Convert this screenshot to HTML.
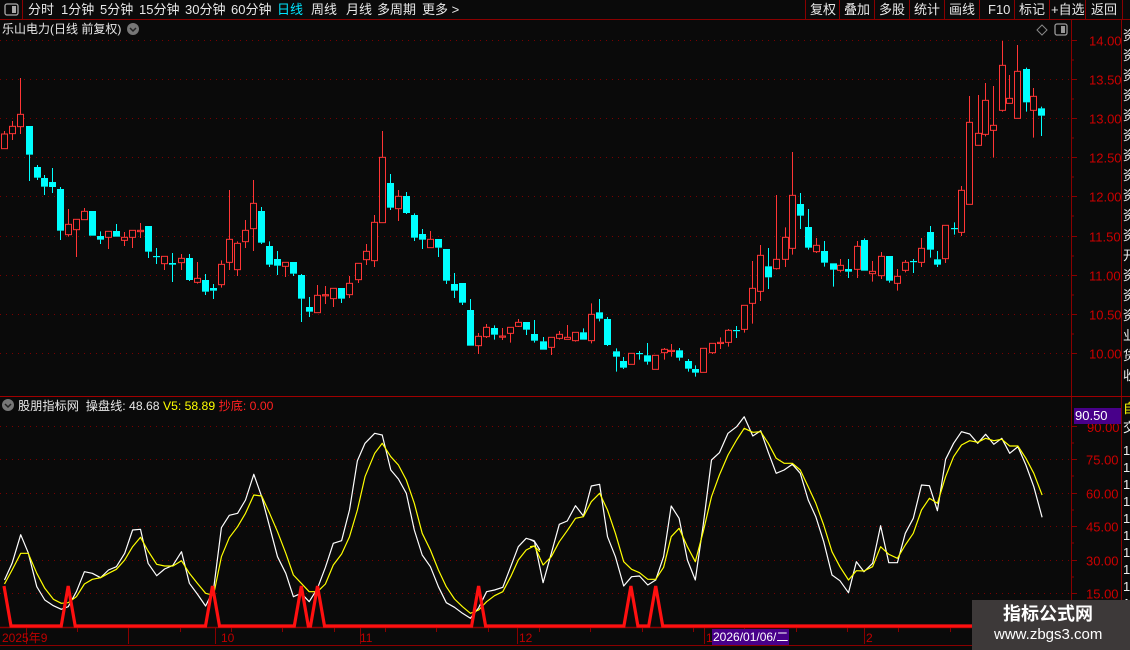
<!DOCTYPE html>
<html><head><meta charset="utf-8">
<style>
*{margin:0;padding:0;box-sizing:border-box}
body{width:1130px;height:650px;background:#0a0a0a;overflow:hidden;position:relative;font-family:"Liberation Sans","Noto Sans CJK SC",sans-serif;color:#ddd}
.t{position:absolute;font-size:13px;white-space:nowrap;line-height:16px}
.b{position:absolute;font-size:13px;white-space:nowrap;line-height:16px;top:2px;color:#e8e8e8}
svg{position:absolute;left:0;top:0}
</style></head><body>
<svg id="s" width="1130" height="650" xmlns="http://www.w3.org/2000/svg"></svg>

<div class="b" style="left:28px">分时</div>
<div class="b" style="left:61px">1分钟</div>
<div class="b" style="left:100px">5分钟</div>
<div class="b" style="left:139px">15分钟</div>
<div class="b" style="left:185px">30分钟</div>
<div class="b" style="left:231px">60分钟</div>
<div class="b" style="left:277px;color:#00e5ff">日线</div>
<div class="b" style="left:311px">周线</div>
<div class="b" style="left:346px">月线</div>
<div class="b" style="left:377px">多周期</div>
<div class="b" style="left:422px">更多 &gt;</div>
<div class="b" style="left:810px">复权</div>
<div class="b" style="left:844px">叠加</div>
<div class="b" style="left:879px">多股</div>
<div class="b" style="left:914px">统计</div>
<div class="b" style="left:949px">画线</div>
<div class="b" style="left:988px">F10</div>
<div class="b" style="left:1019px">标记</div>
<div class="b" style="left:1051px">+自选</div>
<div class="b" style="left:1091px">返回</div>
<div class="t" style="left:2px;top:21px;color:#e8e8e8;font-size:12px">乐山电力(日线 前复权)</div>
<div class="t" style="left:18px;top:398px;color:#e8e8e8;font-size:12.2px">股朋指标网&nbsp; 操盘线: 48.68 <span style="color:#ffff00">V5: 58.89</span> <span style="color:#ff2020">抄底: 0.00</span></div>
<div class="t" style="left:1074px;top:408px;width:47px;height:16px;background:#48008a;color:#fff;padding-left:1px">90.50</div>
<div class="t" style="left:2px;top:630px;color:#c00000;font-size:12px">2025年9</div>
<div class="t" style="left:221px;top:630px;color:#c00000;font-size:12px">10</div>
<div class="t" style="left:360px;top:630px;color:#c00000;font-size:12px">11</div>
<div class="t" style="left:519px;top:630px;color:#c00000;font-size:12px">12</div>
<div class="t" style="left:706px;top:630px;color:#c00000;font-size:12px">1</div>
<div class="t" style="left:712px;top:629px;width:77px;height:16px;background:#48008a;color:#fff;font-size:12px;padding-left:1px">2026/01/06/二</div>
<div class="t" style="left:866px;top:630px;color:#c00000;font-size:12px">2</div>
<div style="position:absolute;left:972px;top:600px;width:158px;height:50px;background:#3d3939"></div>
<div class="t" style="left:1003px;top:603px;color:#fff;font-size:18px;font-weight:bold;line-height:22px">指标公式网</div>
<div class="t" style="left:994px;top:626px;color:#fff;font-size:15px;line-height:18px">www.zbgs3.com</div>

<script>
var s=document.getElementById('s');var h='';
function L(x1,y1,x2,y2,c,w,d){h+='<line x1="'+x1+'" y1="'+y1+'" x2="'+x2+'" y2="'+y2+'" stroke="'+c+'" stroke-width="'+(w||1)+'"'+(d?' stroke-dasharray="'+d+'"':'')+'/>';}
function T(x,y,t,c,fs){h+='<text x="'+x+'" y="'+y+'" fill="'+c+'" font-size="'+(fs||13)+'" font-family="Liberation Sans">'+t+'</text>';}
var R='#8a0000';
L(0,19.5,1130,19.5,R);L(22.5,0,22.5,19,R);
h+='<rect x="5" y="4" width="13" height="11" rx="2" fill="none" stroke="#aaa" stroke-width="1.3"/><rect x="12" y="6" width="4" height="7" fill="#aaa"/>';
[805,839,874,909,944,979,1014,1049,1085,1122].forEach(function(x){L(x+.5,0,x+.5,19,R);});
h+='<circle cx="133" cy="29" r="6" fill="#777"/><path d="M130 28l3 3 3-3" stroke="#222" stroke-width="1.5" fill="none"/>';
h+='<path d="M1042 25l5 5-5 5-5-5z" fill="none" stroke="#888"/><rect x="1055" y="24" width="12" height="11" rx="2" fill="none" stroke="#999" stroke-width="1.3"/><rect x="1061" y="26" width="4" height="7" fill="#999"/>';
L(1071.5,20,1071.5,645,R);L(1121.5,20,1121.5,650,R);L(0,396.5,1130,396.5,'#a00000');L(0,627.5,1071,627.5,R,1.5);L(0,645.5,1071,645.5,R);
var pl=['14.00','13.50','13.00','12.50','12.00','11.50','11.00','10.50','10.00'];
for(var i=0;i<9;i++){var y=Math.round(40+i*39.12)+.5;L(0,y,1070,y,'#7a0000',1,'1 5');L(1071,y,1077,y,R);T(1089,y+5,pl[i],'#cc0000');if(i<8)L(1071,y+19.5,1074,y+19.5,R);}
var il=['90.00','75.00','60.00','45.00','30.00','15.00'];
for(var i=0;i<6;i++){var y=Math.round(426+i*33.4)+.5;L(0,y,1070,y,'#7a0000',1,'1 5');L(1071,y,1077,y,R);if(i>0)T(1086,y+5,il[i],'#cc0000');L(1071,y+16.5,1074,y+16.5,R);}
T(1087,432,'90.00','#cc0000');
[26,77,128,180,231,282,334,385,436,488,539,590,642,693,744,796,847,898,950,1001,1052].forEach(function(x){L(x+.5,628,x+.5,632,R);});
[26,128,215,360,517,704,864].forEach(function(x){L(x+.5,628,x+.5,644,R);});
var rc='资资资资资资资资资资资开资资资业货收';
for(var i=0;i<rc.length;i++){T(1123,40+i*20,rc[i],'#eee',13);}
T(1123,413,'自','#ffff00');T(1123,432,'交','#eee');for(var i=0;i<10;i++)T(1123,455+i*17,'1','#eee');
var A=[[13,192,236,183,236,1],[36,169,191,153,210,1],[59,133,170,24,192,1],[83,168,254,168,333,0],[106,291,323,285,330,0],[129,324,350,315,375,0],[152,336,351,294,369,0],[175,357,482,351,510,0],[198,463,494,417,500,1],[221,448,479,448,561,1],[245,424,449,414,449,1],[268,423,497,423,497,0],[291,498,509,484,522,0],[314,484,502,484,537,1],[338,483,500,462,500,0],[361,502,511,486,528,1],[384,481,502,481,534,1],[408,481,485,459,504,1],[431,468,545,468,564,0],[454,558,560,534,582,0],[477,559,581,559,600,1],[500,579,584,549,636,0],[527,565,578,552,600,1],[550,564,630,552,633,0],[573,625,637,576,641,1],[596,630,665,612,675,0],[619,654,662,642,687,0],[643,583,644,571,653,1],[666,508,577,360,600,1],[689,520,599,514,618,1],[712,481,515,450,534,1],[735,400,476,330,543,1],[759,423,518,411,522,0],[782,528,584,514,591,0],[805,567,587,543,615,0],[828,577,589,577,621,1],[852,576,611,576,618,0],[875,615,686,612,756,0],[898,711,725,681,741,0],[921,676,728,645,728,1],[944,674,677,648,702,1],[968,655,686,655,711,1],[991,654,686,654,699,0],[1014,640,674,618,684,1],[1040,580,629,580,639,1],[1063,544,569,522,585,1],[1087,457,572,435,591,1],[1110,262,458,183,458,1],[1133,339,413,312,420,0],[1156,379,416,360,453,1],[1180,378,429,366,432,0],[1203,435,503,430,513,0],[1226,492,509,477,537,0],[1249,508,533,483,533,1],[1273,507,533,507,561,0],[1296,537,632,537,642,0],[1319,642,662,609,684,0],[1342,639,698,639,705,0],[1365,720,827,687,827,0],[1389,799,827,789,852,1],[1412,772,800,762,804,1],[1435,774,794,766,809,0],[1458,798,801,774,810,1],[1481,772,790,772,818,1],[1505,757,769,747,771,1],[1528,756,779,756,795,0],[1551,792,812,750,818,0]];
var B=[[38,934,959,921,959,0],[62,922,952,922,975,1],[87,913,925,903,929,1],[110,922,928,885,928,1],[134,907,932,907,935,1],[158,907,929,895,929,0],[181,853,932,820,940,1],[205,847,866,807,874,0],[229,867,945,861,948,0],[253,964,980,955,1025,0],[276,993,1013,981,1017,0],[300,970,1003,970,1003,1],[323,969,972,963,989,0],[347,976,995,939,1004,0],[371,976,1018,976,1018,1],[395,958,968,954,989,1],[418,961,964,942,980,1],[442,961,983,954,992,0],[466,993,1016,987,1025,0],[489,1017,1028,1006,1040,0],[513,955,1027,955,1027,1],[537,940,968,940,972,1],[562,937,940,922,957,1],[587,901,937,897,950,1],[610,900,903,888,924,0],[634,826,898,826,908,1],[658,775,820,693,881,1],[681,676,784,645,813,1],[705,709,742,654,777,0],[729,688,716,495,719,1],[753,622,688,592,711,1],[776,496,655,366,674,1],[800,522,557,489,597,0],[823,591,653,537,659,0],[847,646,665,624,669,1],[871,663,698,633,710,0],[895,700,719,700,770,0],[918,706,721,687,727,1],[942,717,725,687,744,0],[966,649,718,633,744,1],[989,630,722,625,722,0],[1013,724,731,693,755,1],[1037,679,737,666,747,1],[1061,678,752,678,758,0],[1087,739,760,717,782,1],[1110,697,721,690,727,1],[1134,693,696,687,729,0],[1158,655,697,624,711,1],[1182,606,659,588,683,0],[1205,688,704,663,711,0],[1229,586,686,586,699,1],[1253,594,597,577,614,0],[1276,481,607,468,618,1],[1300,277,523,198,523,1],[1324,310,346,195,346,1],[1347,211,313,159,319,1],[1371,286,301,168,383,1],[1395,106,241,33,245,1],[1418,205,220,135,220,1],[1442,124,265,45,265,1],[1466,117,217,113,245,0],[1489,199,241,174,323,1],[1513,235,257,230,318,0]];
function C(x,t,b,hi,lo,r){x=Math.round(x)+.5;var c=r?'#ff3535':'#00ffff';if(b-t<1.2){b=t+1.2;}
L(x,hi,x,t,c);L(x,b,x,lo,c);
if(r)h+='<rect x="'+(x-3)+'" y="'+t+'" width="6" height="'+(b-t)+'" fill="#0a0a0a" stroke="'+c+'"/>';
else h+='<rect x="'+(x-3.5)+'" y="'+t+'" width="7" height="'+(b-t)+'" fill="'+c+'"/>';}
A.forEach(function(a){C(a[0]/2.904,70+a[1]/3,70+a[2]/3,70+a[3]/3,70+a[4]/3,a[5]);});
B.forEach(function(a){C(530+a[0]/2.958,30+a[1]/3,30+a[2]/3,30+a[3]/3,30+a[4]/3,a[5]);});
function P(pts,ox,c,w){var d='';for(var i=0;i<pts.length;i+=2){d+=(i?'L':'M')+(ox+pts[i]/2.904).toFixed(1)+' '+(410+pts[i+1]/3).toFixed(1);}h+='<path d="'+d+'" fill="none" stroke="'+c+'" stroke-width="'+w+'" stroke-linejoin="round"/>';}
var w9=[13,510,35,460,60,374,82,428,107,530,130,570,155,587,178,598,198,590,222,545,245,485,268,490,292,503,315,480,338,470,362,430,385,360,408,358,430,460,455,497,478,477,502,466,527,425,550,520,573,552,597,588,620,540,643,353,666,316,690,310,713,270,737,193,760,260,783,350,806,440,830,490,852,560,875,550,898,575,922,535,945,472,968,400,992,392,1015,300,1038,152,1060,100,1088,70,1110,75,1135,180,1157,207,1180,250,1203,360,1226,435,1250,470,1273,530,1296,578,1320,592,1343,610,1366,625,1390,593,1413,545,1436,540,1460,532,1483,470,1505,410,1528,385,1551,392,1568,420];
var y9=[13,522,35,480,60,430,82,430,107,490,130,535,155,568,178,580,198,578,222,560,245,522,268,508,292,503,315,490,338,478,362,450,385,410,408,382,430,423,455,463,478,468,502,468,527,452,550,490,573,520,597,550,620,556,643,440,666,383,690,350,713,310,737,255,760,258,783,310,806,365,830,430,852,495,875,520,898,545,922,545,945,522,968,465,992,432,1015,380,1038,300,1060,200,1088,130,1110,100,1135,140,1157,165,1180,210,1203,280,1226,370,1250,420,1273,480,1296,530,1320,567,1343,590,1366,610,1390,600,1413,575,1436,557,1460,545,1483,500,1505,450,1528,420,1551,408,1568,425];
var w10=[0,388,13,395,38,518,62,430,85,343,108,333,132,287,155,318,178,228,202,223,225,380,248,440,272,528,295,500,318,498,342,525,365,510,388,440,410,288,433,325,457,450,480,510,503,345,527,150,550,128,575,70,600,50,622,20,647,78,670,62,692,127,715,190,738,180,762,163,785,190,808,270,830,320,853,395,877,495,900,512,925,548,948,455,970,485,995,460,1018,347,1042,458,1067,458,1090,370,1113,325,1137,225,1160,227,1183,302,1207,148,1230,100,1253,65,1277,72,1300,100,1323,73,1347,103,1370,85,1393,130,1417,110,1440,165,1463,230,1487,322];
var y10=[0,410,13,408,38,465,62,440,85,395,108,362,132,325,155,320,178,275,202,250,225,300,248,370,272,455,295,478,318,488,342,508,365,508,388,472,410,380,433,355,457,410,480,455,503,365,527,260,550,195,575,135,600,90,622,55,647,67,670,65,692,100,715,145,738,160,762,160,785,180,808,230,830,280,853,345,877,425,900,470,925,510,948,482,970,483,995,470,1018,410,1042,433,1067,445,1090,405,1113,370,1137,300,1160,265,1183,280,1207,200,1230,140,1253,105,1277,92,1300,97,1323,85,1347,92,1370,88,1393,108,1417,108,1440,145,1463,190,1487,255];
P(w9,0,'#ffffff',1.2);P(y9,0,'#ffff00',1.2);P(w10,530,'#ffffff',1.2);P(y10,530,'#ffff00',1.2);
var pk=[68.2,212.5,301.3,317.5,478.6,630.9,655.7];var d='M4 586L11 626';
pk.forEach(function(p){d+='L'+(p-7)+' 626L'+p+' 586L'+(p+7)+' 626';});d+='L1070 626';
h+='<path d="'+d+'" fill="none" stroke="#ff1010" stroke-width="3.2" stroke-linejoin="miter"/>';
h+='<circle cx="8" cy="405" r="6" fill="#777"/><path d="M5 404l3 3 3-3" stroke="#222" stroke-width="1.5" fill="none"/>';
s.innerHTML=h;
</script>
</body></html>
